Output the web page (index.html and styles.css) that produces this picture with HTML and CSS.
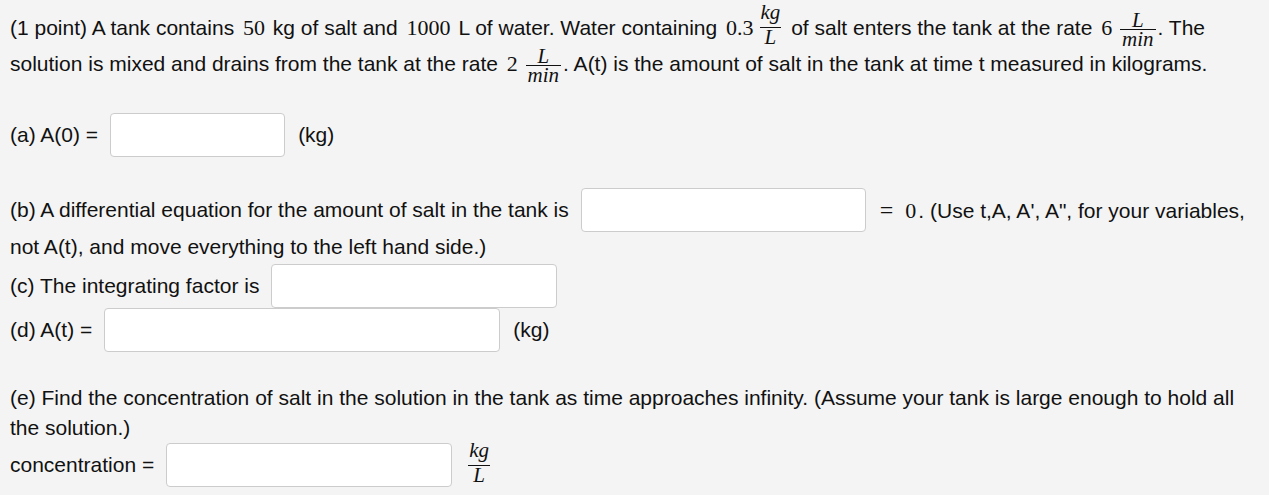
FILE: index.html
```html
<!DOCTYPE html>
<html lang="en">
<head>
<meta charset="utf-8">
<title>Mixing problem</title>
<link rel="stylesheet" href="styles.css">
</head>
<body>
<div class="problem">
  <p class="intro">(1 point) A tank contains <span class="m">50</span> kg of salt and <span class="m">1000</span> L of water. Water containing <span class="m">0.3</span><span class="frac f1"><span class="num">kg</span><span class="den">L</span></span> of salt enters the tank at the rate <span class="m">6</span> <span class="frac f2"><span class="num">L</span><span class="den">min</span></span>. The<br>solution is mixed and drains from the tank at the rate <span class="m">2</span> <span class="frac f2"><span class="num">L</span><span class="den">min</span></span>. A(t) is the amount of salt in the tank at time t measured in kilograms.</p>

  <div class="row row-a">
    <span>(a) A(0) =</span>
    <span class="answer w-a"></span>
    <span>(kg)</span>
  </div>

  <div class="row row-b">
    <span>(b) A differential equation for the amount of salt in the tank is</span>
    <span class="answer w-b"></span>
    <span><span class="m eq">=</span><span class="m">0</span>. (Use t,A, A', A", for your variables,</span>
  </div>
  <div class="line">not A(t), and move everything to the left hand side.)</div>

  <div class="row row-c">
    <span>(c) The integrating factor is</span>
    <span class="answer w-c"></span>
  </div>

  <div class="row row-d">
    <span>(d) A(t) =</span>
    <span class="answer w-d"></span>
    <span>(kg)</span>
  </div>

  <p class="para-e">(e) Find the concentration of salt in the solution in the tank as time approaches infinity. (Assume your tank is large enough to hold all the solution.)</p>

  <div class="row row-e">
    <span>concentration =</span>
    <span class="answer w-e"></span>
    <span class="frac f3"><span class="num">kg</span><span class="den">L</span></span>
  </div>
</div>
</body>
</html>
```

FILE: styles.css
```css
html, body {
  margin: 0;
  padding: 0;
  background: #f4f4f4;
}

.problem {
  padding: 10px 10px 0 10px;
  font-family: "Liberation Sans", Arial, sans-serif;
  font-size: 21px;
  color: #111;
}

.intro {
  margin: 0;
  line-height: 36px;
}

.m {
  font-family: "Liberation Serif", "Times New Roman", serif;
  font-size: 22px;
  margin: 0 2px 0 3px;
}

.m.eq {
  font-size: 24px;
  margin: 0 9px 0 1px;
}

/* display-style fraction */
.frac {
  display: inline-flex;
  flex-direction: column;
  align-items: stretch;
  font-family: "Liberation Serif", "Times New Roman", serif;
  font-style: italic;
  font-size: 21px;
  line-height: 0.8;
  text-align: center;
}

.frac .num {
  padding: 0 1px;
}

.frac .den {
  border-top: 1px solid #111;
  padding-top: 1.5px;
}

.f1 {
  vertical-align: 16px;
  margin: -8px 4px -2px 4px;
}

.f1 .num {
  padding-bottom: 6px;
}

.f2 {
  vertical-align: 8px;
  margin: 0 2px -2px 0;
}

.f2 .num {
  padding-bottom: 0;
}

.f2 .den {
  padding-top: 1px;
  padding-left: 2px;
  padding-right: 2px;
}

.f3 {
  margin: 0 0 4px 3px;
}

.f3 .num {
  padding-bottom: 6px;
}

.row {
  display: flex;
  align-items: center;
  height: 44px;
  white-space: nowrap;
}

.answer {
  display: block;
  box-sizing: border-box;
  height: 44px;
  margin: 0 13px 0 12px;
  background: #fff;
  border: 1px solid #ccc;
  border-radius: 4px;
}

.w-a { width: 175px; }
.w-b { width: 285px; }
.w-c { width: 286px; }
.w-d { width: 396px; }
.w-e { width: 286px; }

.row-a { margin-top: 31px; }
.row-b { margin-top: 31px; }

.line {
  line-height: 30px;
}

.row-c { margin-top: 2px; }
.row-d { margin-top: 0; }

.para-e {
  margin: 31px 0 0 0;
  line-height: 30px;
}
```
